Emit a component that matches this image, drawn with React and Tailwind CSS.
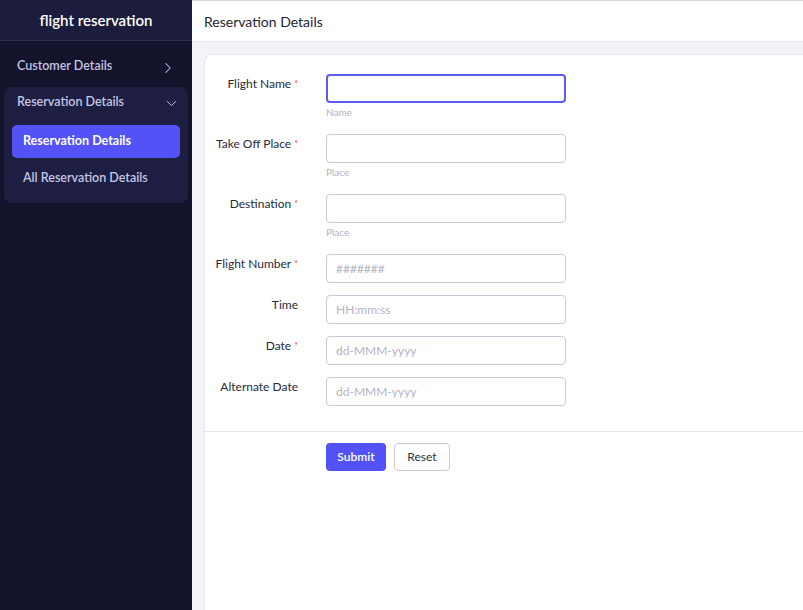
import { ChevronRight, ChevronDown } from 'lucide-react';

const fields = [
  { label: 'Flight Name', required: true, placeholder: '', helper: 'Name', focused: true },
  { label: 'Take Off Place', required: true, placeholder: '', helper: 'Place' },
  { label: 'Destination', required: true, placeholder: '', helper: 'Place' },
  { label: 'Flight Number', required: true, placeholder: '#######' },
  { label: 'Time', required: false, placeholder: 'HH:mm:ss' },
  { label: 'Date', required: true, placeholder: 'dd-MMM-yyyy' },
  { label: 'Alternate Date', required: false, placeholder: 'dd-MMM-yyyy' },
];

const Sidebar = () => (
  <aside className="w-[192px] shrink-0 bg-[#13132c] flex flex-col">
    <div className="h-[41px] bg-[#1c1c3d] border-b border-[#2e2e52] flex items-center justify-center">
      <span className="text-[15px] font-semibold text-white">flight reservation</span>
    </div>
    <div className="px-1 pt-[9px]">
      <div className="h-[32px] flex items-center justify-between pl-[13px] pr-[11px]">
        <span className="text-[12.5px] font-semibold text-[#c3c6e4]">Customer Details</span>
        <ChevronRight size={18} strokeWidth={1.4} className="text-[#c3c6e4] mt-[4px]" />
      </div>
      <div className="mt-[5px] bg-[#1e1e42] rounded-lg pb-[8px]">
        <div className="h-[30px] flex items-center justify-between pl-[13px] pr-[8px]">
          <span className="text-[12.5px] font-semibold text-[#c3c6e4]">Reservation Details</span>
          <ChevronDown size={17} strokeWidth={1.4} className="text-[#c3c6e4] mt-[3px]" />
        </div>
        <div className="px-2 pt-[8px] flex flex-col gap-[4px]">
          <div className="h-[33px] bg-[#5252f6] rounded-[5px] flex items-center pl-[11px]">
            <span className="text-[12.5px] font-bold text-white">Reservation Details</span>
          </div>
          <div className="h-[33px] flex items-center pl-[11px]">
            <span className="text-[12.5px] font-semibold text-[#c3c6e4]">All Reservation Details</span>
          </div>
        </div>
      </div>
    </div>
  </aside>
);

const Field = ({ f }) => (
  <div className="flex items-start">
    <div className="w-[121px] shrink-0 pr-[28px] pt-[2px] text-right text-[12px] leading-[16px] text-[#262a3a]">
      {f.label}
      {f.required && <span className="text-[#ef4444] text-[9px] align-top ml-[3px]">*</span>}
    </div>
    <div className="flex flex-col">
      <input
        placeholder={f.placeholder}
        className={`w-[240px] h-[29px] rounded-[4px] bg-white px-[9px] text-[12px] text-[#2d3142] placeholder:text-[#b2b4c4] outline-none ${f.focused ? 'border-2 border-[#5b5bf2]' : 'border border-[#c9c9d9]'}`}
      />
      {f.helper && <span className="text-[10px] leading-[12px] text-[#b2b4c6] mt-[3px] pb-[4px]">{f.helper}</span>}
    </div>
  </div>
);

const App = () => {
  return (
    <div className="flex h-[610px] w-full overflow-hidden" style={{ fontFamily: 'Lato, "Noto Sans", sans-serif' }}>
      <Sidebar />
      <main className="flex-1 flex flex-col bg-[#f3f4f7] border-t border-[#d6d6e0]">
        <div className="h-[41px] bg-white border-b border-[#e4e5ec] flex items-center pl-3">
          <h1 className="text-[14px] text-[#1f2433]">Reservation Details</h1>
        </div>
        <div className="flex-1 pt-3 pl-3">
          <div className="h-full bg-white rounded-tl-lg border-l border-t border-[#e6e7ee]">
            <div className="pt-[19px] flex flex-col gap-[12px]">
              {fields.map((f) => (
                <Field key={f.label} f={f} />
              ))}
            </div>
            <div className="mt-[25px] border-t border-[#e6e7ee] pt-[11px] pl-[121px] flex gap-2">
              <button className="h-[28px] w-[60px] rounded-[4px] bg-[#5252f6] text-white text-[12px] font-semibold">Submit</button>
              <button className="h-[28px] w-[56px] rounded-[4px] bg-white border border-[#c9c9d9] text-[#2d3142] text-[12px]">Reset</button>
            </div>
          </div>
        </div>
      </main>
    </div>
  );
};

export default App;
